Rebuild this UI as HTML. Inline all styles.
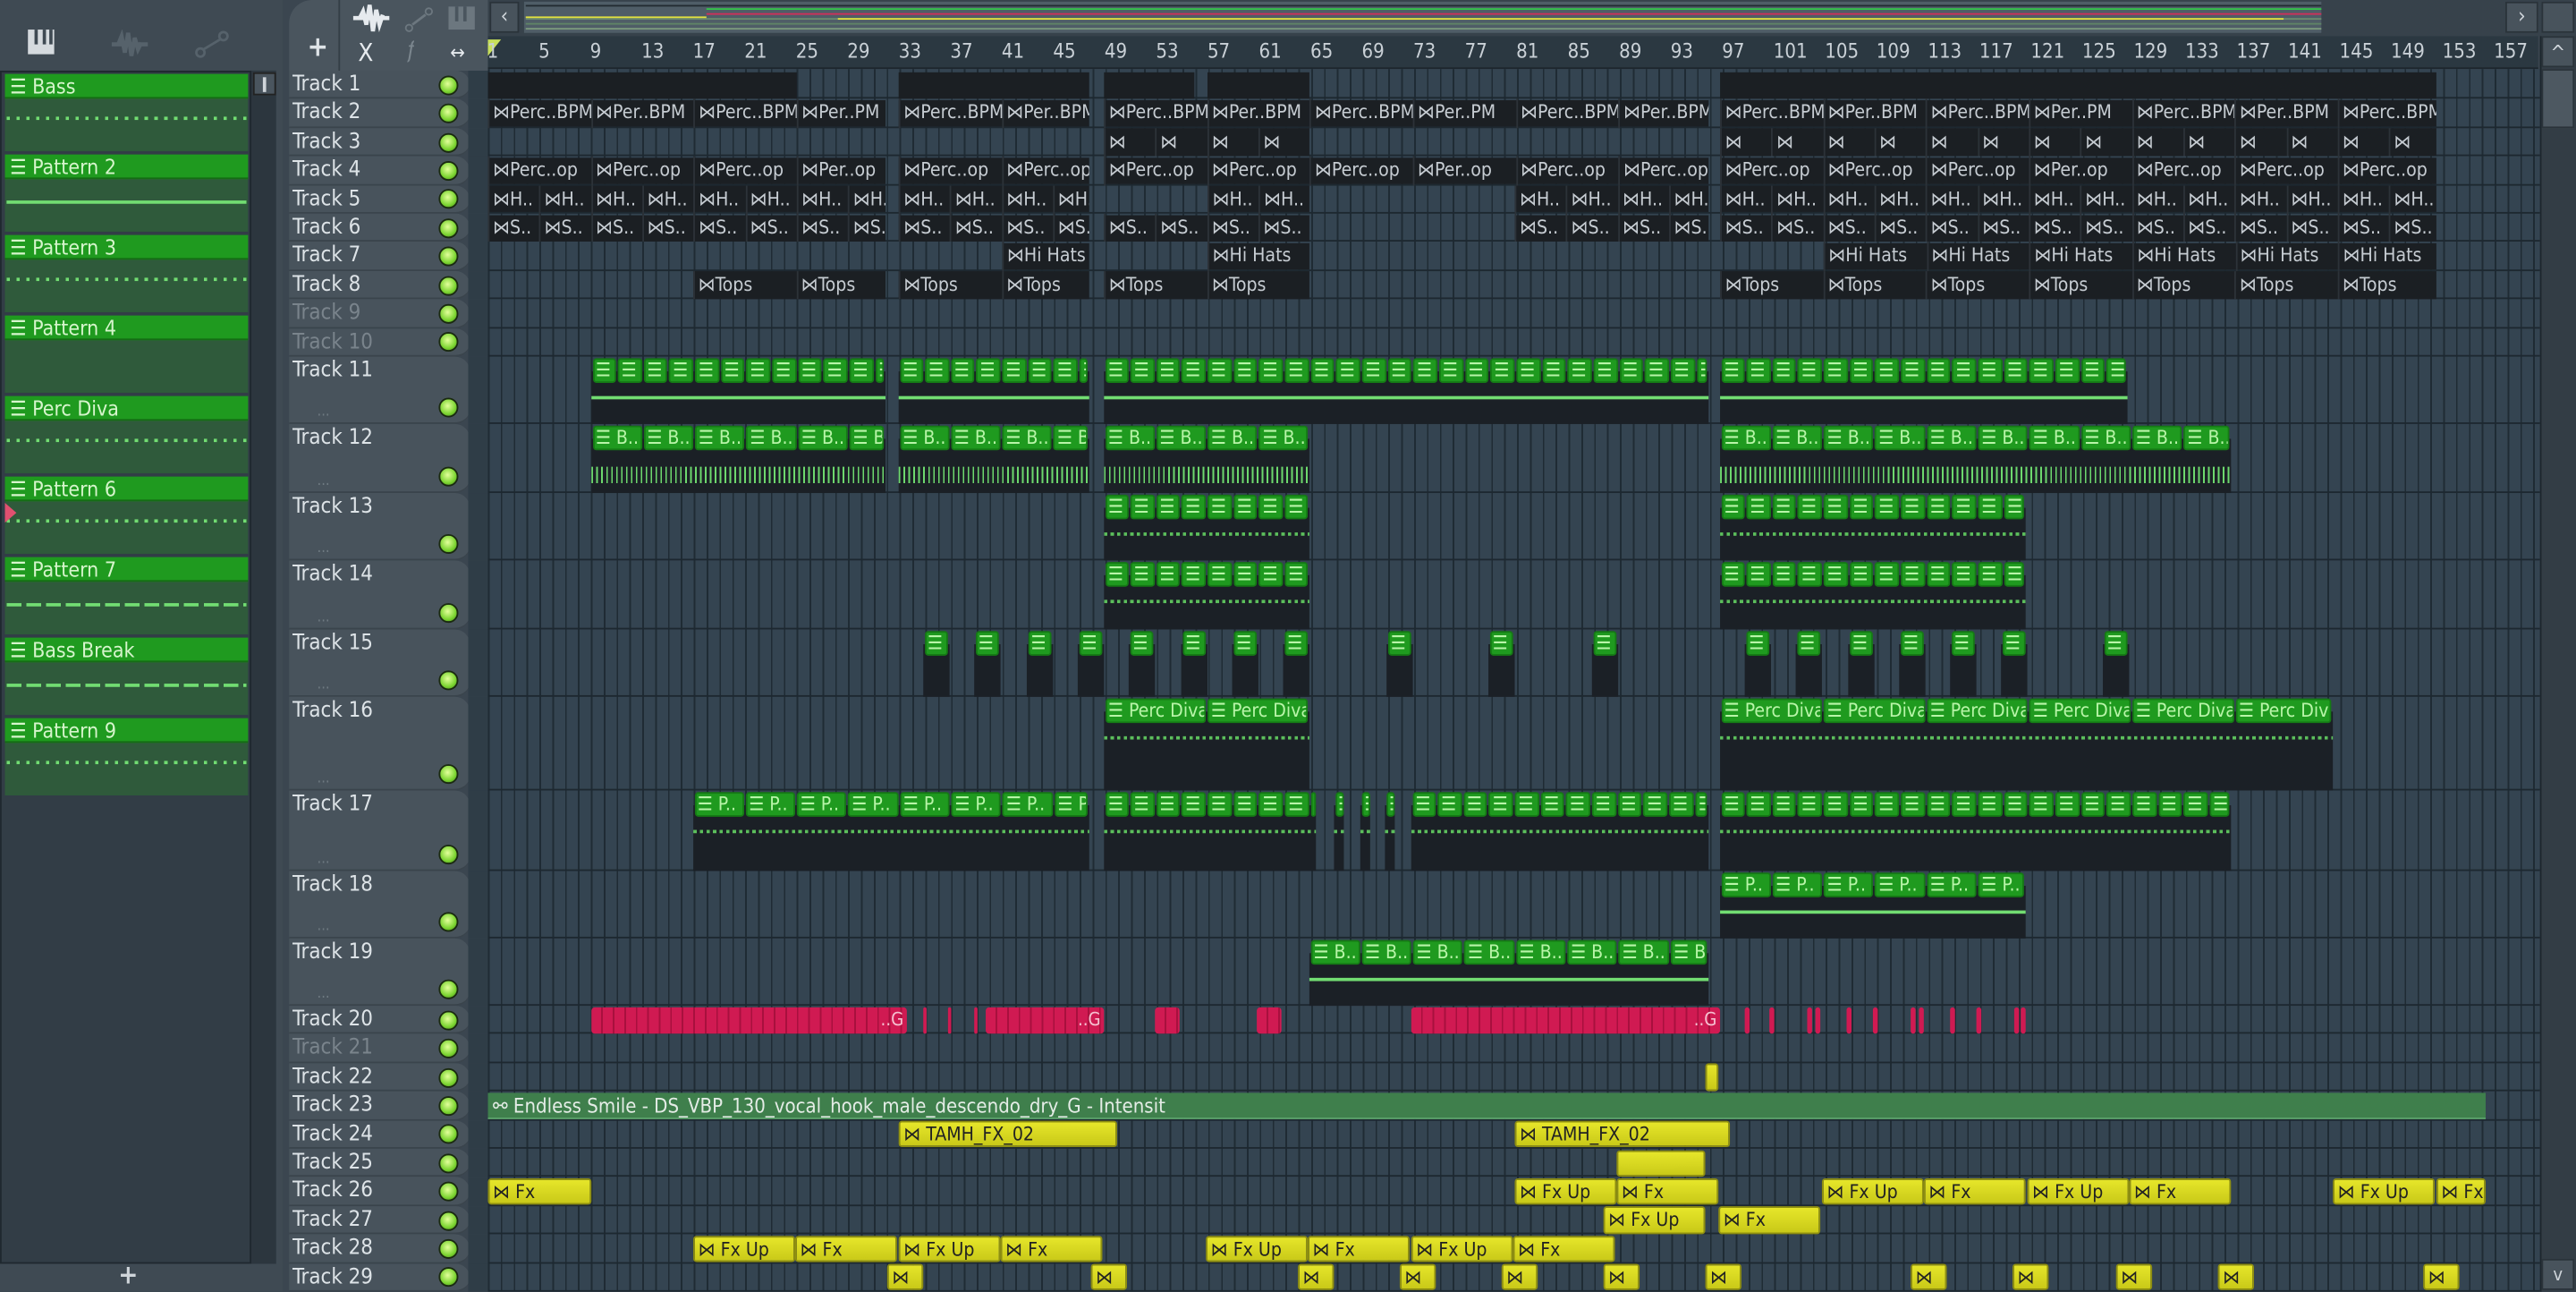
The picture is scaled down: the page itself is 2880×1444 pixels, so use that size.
<!DOCTYPE html>
<html><head><meta charset="utf-8">
<style>
html,body{margin:0;padding:0;width:2880px;height:1444px;overflow:hidden;background:#3b4650;}
#root{position:absolute;left:0;top:0;width:1568px;height:786px;transform:scale(1.83674);transform-origin:0 0;overflow:hidden;background:#3b4650;font-family:"DejaVu Sans Condensed","Liberation Sans Narrow","Liberation Sans",sans-serif;}
.a{position:absolute;box-sizing:border-box;}
.t{white-space:nowrap;overflow:hidden;}
</style></head><body>
<div id="root">
  <div class="a" style="left:0;top:0;width:172px;height:786px;background:#3f4a53;"></div>
  <div class="a" style="left:0;top:43px;width:168px;height:726px;background:#323d46;border:1px solid #1f282f;"></div>
  <div class="a" style="left:152px;top:43px;width:16px;height:726px;background:#2c363e;border-left:1px solid #1f282f;"></div>
  <div class="a" style="left:154px;top:44px;width:14px;height:14px;background:#4a555e;border:1px solid #222;"></div>
  <div class="a" style="left:160px;top:47px;width:2px;height:9px;background:#cfd5da;"></div>
  <div class="a t" style="left:72px;top:766px;color:#cfd5da;font-size:16px;font-weight:bold;">+</div>
  <svg class="a" style="left:16px;top:17px" width="22" height="20" viewBox="0 0 22 20"><rect x="1" y="1" width="16" height="15" fill="#d5dade"/><rect x="5" y="1" width="2" height="9" fill="#3f4a53"/><rect x="10" y="1" width="2" height="9" fill="#3f4a53"/><rect x="14" y="1" width="2" height="9" fill="#3f4a53"/></svg>
  <svg class="a" style="left:66px;top:18px" width="26" height="18" viewBox="0 0 26 18"><path d="M2 9H24M6 9L8 4L10 14L12 2L14 16L16 5L18 12L20 8" stroke="#56626b" stroke-width="2.5" fill="none"/></svg>
  <svg class="a" style="left:118px;top:18px" width="22" height="18" viewBox="0 0 22 18"><circle cx="4" cy="14" r="2.5" stroke="#56626b" fill="none" stroke-width="1.5"/><circle cx="18" cy="4" r="2.5" stroke="#56626b" fill="none" stroke-width="1.5"/><path d="M6 12L16 6" stroke="#56626b" stroke-width="1.5"/></svg>
  <div class="a" style="left:176px;top:0;width:121px;height:43px;background:#4a555e;border-radius:14px 0 0 0;"></div>
  <div class="a" style="left:206px;top:0;width:1px;height:43px;background:#343e46;"></div>
  <div class="a t" style="left:187px;top:19px;color:#dfe4e8;font-size:17px;font-weight:bold;">+</div>
  <svg class="a" style="left:213px;top:2px" width="26" height="18" viewBox="0 0 26 18"><path d="M2 9H24M6 9L8 5L10 13L12 1L14 17L16 4L18 13L20 7" stroke="#e6eaee" stroke-width="2.5" fill="none"/></svg>
  <svg class="a" style="left:246px;top:4px" width="18" height="16" viewBox="0 0 18 16"><circle cx="3" cy="13" r="2" stroke="#6c777f" fill="none"/><circle cx="15" cy="3" r="2" stroke="#6c777f" fill="none"/><path d="M5 11L13 5" stroke="#6c777f" stroke-width="1.5"/></svg>
  <svg class="a" style="left:272px;top:3px" width="18" height="16" viewBox="0 0 18 16"><rect x="1" y="1" width="16" height="14" fill="#6c777f"/><rect x="5" y="1" width="2" height="9" fill="#4a555e"/><rect x="10" y="1" width="2" height="9" fill="#4a555e"/></svg>
  <div class="a t" style="left:218px;top:23px;color:#e6eaee;font-size:15px;">X</div>
  <div class="a t" style="left:248px;top:23px;color:#7b868e;font-size:14px;font-style:italic;">ƒ</div>
  <div class="a t" style="left:274px;top:25px;color:#e6eaee;font-size:12px;">↔</div>
  <div class="a" style="left:297px;top:0;width:1271px;height:22px;background:#37424b;"></div>
  <div class="a" style="left:298px;top:1px;width:18px;height:19px;background:#48535c;border:1px solid #2a333a;color:#cfd5da;font-size:13px;text-align:center;line-height:17px;">‹</div>
  <div class="a" style="left:1525px;top:1px;width:20px;height:19px;background:#48535c;border:1px solid #2a333a;color:#cfd5da;font-size:13px;text-align:center;line-height:17px;">›</div>
  <div class="a" style="left:1547px;top:1px;width:20px;height:19px;background:#48535c;border:1px solid #2a333a;"></div>
  <div class="a" style="left:319px;top:1px;width:1094px;height:19px;background:#4f5d67;"></div>
  <div class="a" style="left:297px;top:22px;width:1248px;height:20px;background:#2b3841;border-bottom:1px solid #1d262d;"></div>
  <div class="a" style="left:297px;top:24px;width:0;height:0;border-left:8px solid #c8e05a;border-bottom:10px solid transparent;"></div>
  <div class="a" style="left:1546px;top:22px;width:22px;height:764px;background:#333d45;border-left:1px solid #1d262d;"></div>
  <div class="a" style="left:1547px;top:22px;width:20px;height:19px;background:#48535c;border:1px solid #2a333a;color:#cfd5da;font-size:12px;text-align:center;line-height:18px;">^</div>
  <div class="a" style="left:1547px;top:42px;width:20px;height:36px;background:#4d5861;border:1px solid #2a333a;"></div>
  <div class="a" style="left:1547px;top:766px;width:20px;height:19px;background:#48535c;border:1px solid #2a333a;color:#cfd5da;font-size:11px;text-align:center;line-height:18px;">v</div>
  <div class="a" id="grid" style="left:297px;top:42px;width:1249px;height:744px;background:#344451;background-image:repeating-linear-gradient(90deg,#1f2b34 0,#1f2b34 1px,transparent 1px,transparent 7.83px);"></div>
</div>
<script>
var R=document.getElementById('root');
function el(s,txt){var d=document.createElement('div');d.className='a';d.style.cssText=s;if(txt!==undefined){d.textContent=txt;d.classList.add('t');}R.appendChild(d);return d;}
function X(b){return 297.5+(b-1)*7.83;}
[[320,1413,3,'#222b31'],[320,1413,11,'#6a8b6e'],[320,1413,14,'#5f8466'],[320,1413,17,'#7b9a7e'],[430,1413,5,'#34c24a'],[430,1413,8,'#d0305a'],[320,430,10,'#e0e040'],[510,1390,11,'#e0e040']].forEach(function(o){el('left:'+o[0]+'px;top:'+o[2]+'px;width:'+(o[1]-o[0])+'px;height:1px;background:'+o[3]+';');});
for(var b=1;b<=157;b+=4){el('left:'+(X(b)-1)+'px;top:24px;color:#c9d0d6;font-size:12px;',String(b));}
var rows=[];for(var i=0;i<10;i++)rows.push([43+17.4*i,17.4]);
[[217,41.3],[258.3,41.7],[300,41.3],[341.3,41.7],[383,41],[424,57],[481,49],[530,41],[571,41]].forEach(function(r){rows.push(r)});
for(i=0;i<10;i++)rows.push([612+17.4*i,17.4]);
rows.forEach(function(r,i){
  var n=i+1,tall=r[1]>20;
  el('left:176px;top:'+r[0]+'px;width:110px;height:'+r[1]+'px;background:#48535c;border-bottom:1px solid #3a444c;border-radius:0 9px 9px 0;');
  el('left:285px;top:'+r[0]+'px;width:12px;height:'+r[1]+'px;background:#2f3d47;');
  el('left:297px;top:'+(r[0]+r[1]-1)+'px;width:1249px;height:1px;background:#1d2830;');
  var dim=(n==9||n==10||n==21);
  el('left:178px;top:'+(r[0]+1)+'px;color:'+(dim?'#7a848c':'#dde3e7')+';font-size:13px;line-height:15px;','Track '+n);
  var cy=tall?r[0]+r[1]-10:r[0]+r[1]/2;
  el('left:267px;top:'+(cy-6)+'px;width:12px;height:12px;border-radius:50%;background:radial-gradient(circle at 45% 40%,#e2ff9a,#7bd430 60%,#3f7a18);border:1px solid #1a2a10;');
  if(tall)el('left:193px;top:'+(r[0]+r[1]-12)+'px;color:#6f7a82;font-size:9px;','...');
});
function audio(t,x1,x2,seg,labels){var r=rows[t-1];
  el('left:'+x1+'px;top:'+(r[0]+0.5)+'px;width:'+(x2-x1)+'px;height:'+(r[1]-1)+'px;background:#1b1f23;');
  if(!seg)return;var k=0;for(var x=x1;x<x2-3;x+=seg){var w=Math.min(seg,x2-x);
    el('left:'+x+'px;top:'+r[0]+'px;width:'+(w)+'px;height:'+r[1]+'px;border-left:1px solid #2c3238;color:#c6ccd2;font-size:11.5px;line-height:17px;padding-left:2px;',labels?'⋈'+labels[k%labels.length]:'');k++;}}
function pat(t,x1,x2,seg,labels,kind){var r=rows[t-1];
  el('left:'+x1+'px;top:'+(r[0]+9)+'px;width:'+(x2-x1)+'px;height:'+(r[1]-9)+'px;background:#1b2026;');
  if(kind=='line')el('left:'+x1+'px;top:'+(r[0]+24)+'px;width:'+(x2-x1)+'px;height:2px;background:#72dd72;');
  if(kind=='wave')el('left:'+x1+'px;top:'+(r[0]+26)+'px;width:'+(x2-x1)+'px;height:10px;background:repeating-linear-gradient(90deg,#6dd86d 0,#6dd86d 1px,#1b2026 1px,#1b2026 3px);');
  if(kind=='dots')el('left:'+x1+'px;top:'+(r[0]+24)+'px;width:'+(x2-x1)+'px;height:1.5px;background:repeating-linear-gradient(90deg,#5cbf5c 0,#5cbf5c 2px,transparent 2px,transparent 4px);');
  var k=0;for(var x=x1;x<x2-2;x+=seg){var w=Math.min(seg,x2-x);
    el('left:'+(x+0.5)+'px;top:'+(r[0]+1)+'px;width:'+(w-1)+'px;height:15px;background:#1f9a1f;border-radius:2px;border:1px solid #157a15;color:#b8f5a8;font-size:11.5px;line-height:13px;padding-left:1px;','☰'+(labels?' '+labels[k%labels.length]:''));k++;}}
function yel(t,x1,x2,lab){var r=rows[t-1];
  el('left:'+x1+'px;top:'+(r[0]+0.5)+'px;width:'+(x2-x1)+'px;height:'+(r[1]-1)+'px;background:linear-gradient(#e6e62a,#c9c918);border:1px solid #8f8f10;border-radius:2px;color:#222;font-size:11.5px;line-height:15px;padding-left:2px;',lab===undefined?'':'⋈ '+lab);}
function red(t,x1,x2,lab){var r=rows[t-1];
  el('left:'+x1+'px;top:'+(r[0]+0.5)+'px;width:'+(x2-x1)+'px;height:'+(r[1]-1)+'px;background:repeating-linear-gradient(90deg,#d01a52 0,#d01a52 6px,#a8103e 6px,#a8103e 7px);border-radius:2px;color:#f5c0d0;font-size:11px;line-height:15px;text-align:right;padding-right:2px;',lab||'');}
[[297,485],[547,663],[672,727],[735,797],[1047,1483]].forEach(function(c){audio(1,c[0],c[1]);});
var s8=62.64,s4=31.32;
[[297,539],[547,663],[672,1040],[1047,1483]].forEach(function(c){audio(2,c[0],c[1],s8,['Perc..BPM','Per..BPM','Perc..BPM','Per..PM']);audio(4,c[0],c[1],s8,['Perc..op','Perc..op','Perc..op','Per..op']);});
[[672,797],[1047,1483]].forEach(function(c){audio(3,c[0],c[1],s4,['']);});
[[297,539],[547,663],[735,797],[922,1040],[1047,1483]].forEach(function(c){audio(5,c[0],c[1],s4,['H..']);});
[[297,539],[547,663],[672,797],[922,1040],[1047,1483]].forEach(function(c){audio(6,c[0],c[1],s4,['S..']);});
[[610,663],[735,797],[1110,1483]].forEach(function(c){audio(7,c[0],c[1],s8,['Hi Hats']);});
[[422,539],[547,663],[672,797],[1047,1483]].forEach(function(c){audio(8,c[0],c[1],s8,['Tops']);});
[[360,539],[547,663],[672,1040],[1047,1295]].forEach(function(c){pat(11,c[0],c[1],15.66,null,'line');});
[[360,539],[547,663],[672,797],[1047,1358]].forEach(function(c){pat(12,c[0],c[1],s4,['B..'],'wave');});
[[672,797],[1047,1233]].forEach(function(c){pat(13,c[0],c[1],15.66,null,'dots');pat(14,c[0],c[1],15.66,null,'dots');});
[562,593,625,656,687,719,750,781,844,906,969,1062,1093,1125,1156,1187,1218,1280].forEach(function(x){pat(15,x,x+15.5,15.66,null,'');});
[[672,797],[1047,1420]].forEach(function(c){pat(16,c[0],c[1],s8,['Perc Diva'],'dots');});
[[422,663],[672,801],[812,818],[828,834],[843,849],[859,1040],[1047,1358]].forEach(function(c,i){pat(17,c[0],c[1],i==1||i==5||i==6?15.66:s4,(i==0?['P..']:null),'dots');});
pat(18,1047,1233,s4,['P..'],'line');
pat(19,797,1040,s4,['B..'],'line');
red(20,360,552,'..G');[562,577,593].forEach(function(x){red(20,x,x+2);});red(20,600,672,'..G');red(20,703,718);red(20,765,780);red(20,859,1047,'..G');
[1062,1077,1100,1105,1124,1140,1163,1168,1187,1203,1226,1230].forEach(function(x){red(20,x,x+2.5);});
yel(22,1038,1046);
(function(){var r=rows[22];el('left:297px;top:'+(r[0]+0.5)+'px;width:1216px;height:'+(r[1]-1)+'px;background:#3f7f4c;border-bottom:1px solid #5aa06a;color:#e4ece6;font-size:12px;line-height:16px;padding-left:3px;','⚯ Endless Smile - DS_VBP_130_vocal_hook_male_descendo_dry_G - Intensit');})();
yel(24,547,680,'TAMH_FX_02');yel(24,922,1053,'TAMH_FX_02');
yel(25,984,1038);
yel(26,297,360,'Fx');[[922,'Fx Up'],[984,'Fx'],[1109,'Fx Up'],[1171,'Fx'],[1234,'Fx Up'],[1296,'Fx'],[1420,'Fx Up']].forEach(function(c){yel(26,c[0],c[0]+62,c[1]);});yel(26,1483,1513,'Fx');
yel(27,976,1038,'Fx Up');yel(27,1046,1108,'Fx');
[[422,'Fx Up'],[484,'Fx'],[547,'Fx Up'],[609,'Fx'],[734,'Fx Up'],[796,'Fx'],[859,'Fx Up'],[921,'Fx']].forEach(function(c){yel(28,c[0],c[0]+62,c[1]);});
[540,664,790,852,914,976,1038,1163,1225,1288,1350,1475].forEach(function(x){yel(29,x,x+22,'');});
['Bass','Pattern 2','Pattern 3','Pattern 4','Perc Diva','Pattern 6','Pattern 7','Bass Break','Pattern 9'].forEach(function(n,i){var y=45+49*i;
  el('left:3px;top:'+y+'px;width:148px;height:47px;background:#2f5a3b;');
  el('left:3px;top:'+y+'px;width:148px;height:15px;background:#1f9a1f;border-bottom:1px solid #156c15;color:#d6f5cc;font-size:12.5px;line-height:15px;padding-left:3px;','☰ '+n);
  var ly=y+28;
  if(i==1||i==6||i==7)el('left:4px;top:'+ly+'px;width:146px;height:2px;background:'+(i==1?'#72dd72':'repeating-linear-gradient(90deg,#72dd72 0,#72dd72 9px,transparent 9px,transparent 12px)')+';');
  else if(i!=3)el('left:4px;top:'+(ly-2)+'px;width:146px;height:2px;background:repeating-linear-gradient(90deg,#72dd72 0,#72dd72 2px,transparent 2px,transparent 6px);');
});
el('left:3px;top:306px;width:0;height:0;border-left:7px solid #e05070;border-top:6px solid transparent;border-bottom:6px solid transparent;');
</script>
</body></html>
